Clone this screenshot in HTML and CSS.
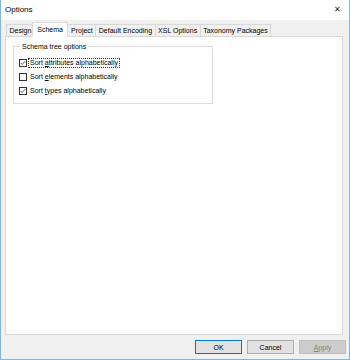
FILE: index.html
```html
<!DOCTYPE html>
<html lang="en">
<head>
  <meta charset="UTF-8">
  <title>Options</title>
  <link rel="stylesheet" href="styles.css">
</head>
<body>
  <div class="window">
    <div class="title-bar">
      <span class="title">Options</span>
      <span class="close">&#x2715;</span>
    </div>
    <div class="dialog">
      <div class="tabs">
        <div class="tab">Design</div>
        <div class="tab active">Schema</div>
        <div class="tab">Project</div>
        <div class="tab">Default Encoding</div>
        <div class="tab">XSL Options</div>
        <div class="tab">Taxonomy Packages</div>
      </div>
      <div class="panel">
        <fieldset class="group">
          <legend>Schema tree options</legend>
          <label class="check-row">
            <span class="box"><svg viewBox="0 0 7 7" width="7" height="7"><path d="M0.8 3.4 L2.6 5.2 L6.2 1.2" fill="none" stroke="#333" stroke-width="0.9"/></svg></span>
            <span class="label focused">Sort <u>a</u>ttributes alphabetically</span>
          </label>
          <label class="check-row">
            <span class="box"></span>
            <span class="label">Sort <u>e</u>lements alphabetically</span>
          </label>
          <label class="check-row">
            <span class="box"><svg viewBox="0 0 7 7" width="7" height="7"><path d="M0.8 3.4 L2.6 5.2 L6.2 1.2" fill="none" stroke="#333" stroke-width="0.9"/></svg></span>
            <span class="label">Sort <u>t</u>ypes alphabetically</span>
          </label>
        </fieldset>
      </div>
      <div class="buttons">
        <button class="btn default">OK</button>
        <button class="btn">Cancel</button>
        <button class="btn" disabled><u>A</u>pply</button>
      </div>
    </div>
  </div>
</body>
</html>
```

FILE: styles.css
```css
body {
  margin: 0;
  font-family: "Liberation Sans", Arial, sans-serif;
  font-size: 7px;
  color: #000;
  background: #fff;
}

.window {
  width: 350px;
  height: 360px;
  box-sizing: border-box;
  border: 1px solid #7fb6e8;
  border-top: none;
  display: flex;
  flex-direction: column;
}

.title-bar {
  height: 18px;
  background: #fff;
  display: flex;
  align-items: center;
  justify-content: space-between;
  padding: 0 8px 2px 4px;
}

.title {
  font-size: 8px;
}

.close {
  font-size: 8px;
  color: #222;
}

.dialog {
  flex: 1;
  background: #f0f0f0;
  display: flex;
  flex-direction: column;
  padding: 3px 4px 5px 4px;
}

.tabs {
  display: flex;
  align-items: flex-end;
  height: 13px;
  padding-left: 1px;
}

.tab {
  height: 11px;
  line-height: 11px;
  padding: 0 2.5px;
  border: 1px solid #d9d9d9;
  border-bottom: none;
  margin-right: -1px;
  background: #f0f0f0;
  white-space: nowrap;
}

.tab.active {
  height: 13px;
  line-height: 13px;
  background: #fff;
  position: relative;
  z-index: 1;
  margin: 0 -1px -1px -2px;
  padding: 0 4.5px;
  border-bottom: 1px solid #fff;
}

.panel {
  flex: 1;
  background: #fff;
  border: 1px solid #d9d9d9;
  margin-right: 2px;
  padding: 6px 0 0 7px;
}

.group {
  width: 200px;
  height: 61px;
  box-sizing: border-box;
  margin: 0;
  border: 1px solid #dcdcdc;
  padding: 9px 0 0 5px;
  display: flex;
  flex-direction: column;
  gap: 6px;
}

.group legend {
  padding: 0 2px;
  margin-left: 1px;
}

.check-row {
  display: flex;
  align-items: center;
  gap: 2px;
  height: 8px;
}

.box {
  width: 8px;
  height: 8px;
  border: 1px solid #333;
  background: #fff;
  box-sizing: border-box;
  display: flex;
  align-items: center;
  justify-content: center;
}

.box svg {
  display: block;
  width: 6px;
  height: 6px;
}

.label {
  padding: 0 1px;
  line-height: 8px;
}

.label.focused {
  outline: 1px dotted #333;
}

.buttons {
  display: flex;
  justify-content: flex-end;
  gap: 5px;
  padding-top: 5px;
  margin-right: -1px;
}

.btn {
  width: 47px;
  height: 14px;
  font-family: inherit;
  font-size: 7px;
  background: #e1e1e1;
  border: 1px solid #adadad;
  padding: 0;
  color: #000;
}

.btn.default {
  border-color: #0078d7;
}

.btn:disabled {
  background: #cccccc;
  border-color: #bfbfbf;
  color: #838383;
}
```
